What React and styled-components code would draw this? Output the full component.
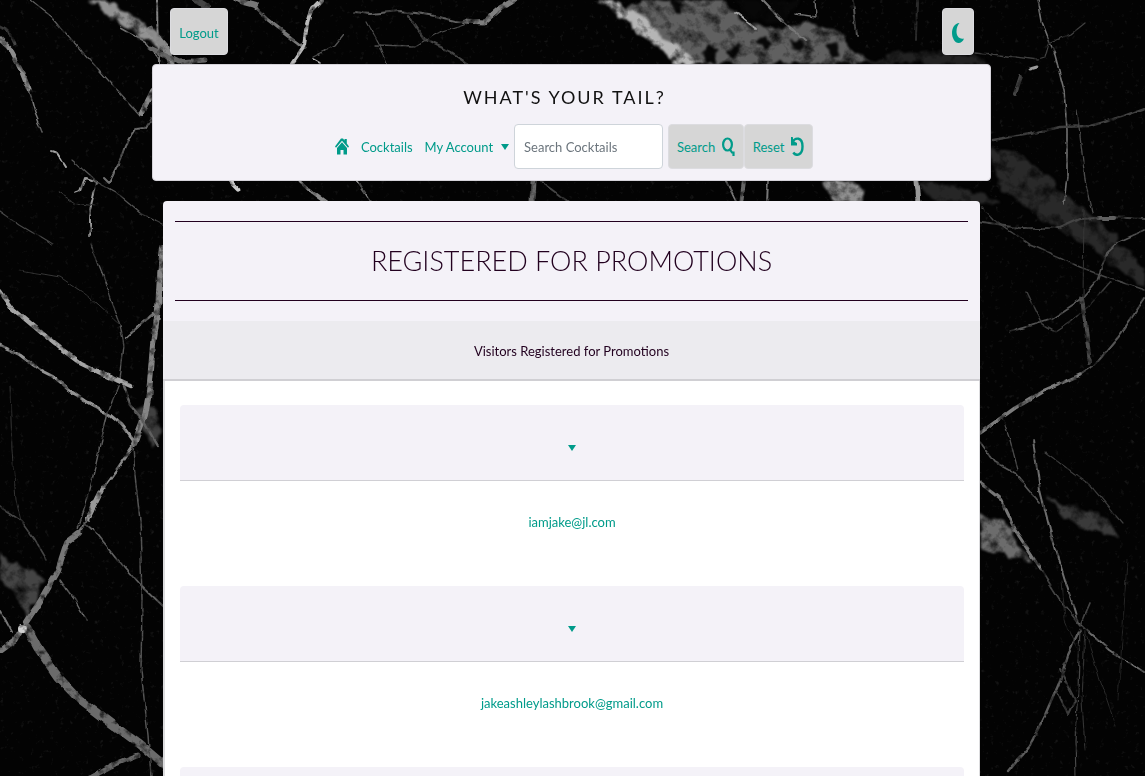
import React from "react";
import styled, { createGlobalStyle } from "styled-components";

const teal = "#009b8a";
const panel = "#f4f2f8";
const plum = "#22001f";

const GlobalStyle = createGlobalStyle`
  *, *::before, *::after { box-sizing: border-box; }
  body {
    margin: 0;
    min-height: 100vh;
    overflow-x: hidden;
    background: #030303;
    color: ${plum};
    font-family: Lato, "Open Sans", sans-serif;
    font-size: 13px;
    line-height: 28px;
  }
`;

const Backdrop = styled.svg`
  position: fixed;
  inset: 0;
  z-index: -1;
  width: 100%;
  height: 100%;
`;

const Page = styled.div`
  max-width: 841px;
  margin: 0 auto;
  padding-right: 2px;
  height: 100vh;
  overflow: hidden;
`;

const TopBar = styled.div`
  display: flex;
  justify-content: space-between;
  padding: 8px 17px 9px 18px;
`;

const Button = styled.button`
  display: inline-flex;
  align-items: center;
  justify-content: center;
  gap: 7px;
  min-width: ${(p) => p.$width}px;
  height: ${(p) => (p.$tall ? "47px" : "45px")};
  padding: ${(p) => (p.$tall ? "2px 6px 0" : "0 6px")};
  border: 1px solid #dcdce0;
  border-radius: 4px;
  background: #d6d6d6;
  color: ${teal};
  font: inherit;
  cursor: pointer;
  svg { flex-shrink: 0; }
`;

const Header = styled.header`
  display: flex;
  flex-direction: column;
  align-items: center;
  gap: 12px;
  height: 117px;
  padding-top: 17px;
  border: 1px solid #d5d3d9;
  border-radius: 4px;
  background: ${panel};
`;

const Brand = styled.a`
  margin-right: 14px;
  color: #111;
  font-size: 18px;
  line-height: 30px;
  letter-spacing: 2px;
  text-decoration: none;
  text-transform: uppercase;
`;

const Nav = styled.nav`
  display: flex;
  align-items: center;
  gap: 12px;
  padding-left: 5px;
`;

const NavLink = styled.a`
  display: inline-flex;
  align-items: center;
  gap: 8px;
  color: ${teal};
  text-decoration: none;
`;

const SearchForm = styled.form`
  display: flex;
  margin-left: -7px;
`;

const SearchInput = styled.input`
  width: 149px;
  height: 45px;
  margin-right: 5px;
  padding: 0 9px;
  border: 1px solid #ced4da;
  border-radius: 4px;
  background: #fff;
  color: #495057;
  font: inherit;
  &::placeholder { color: #6c757d; opacity: 1; }
`;

const Caret = styled.span`
  display: inline-block;
  border-top: 6px solid ${teal};
  border-right: 4px solid transparent;
  border-left: 4px solid transparent;
`;

const Main = styled.main`
  margin: 20px 11px 0;
  border-radius: 4px;
  background: ${panel};
  text-align: center;
`;

const Banner = styled.div`
  padding: 20px 12px;
`;

const Title = styled.h1`
  margin: 0;
  padding: 20px 0;
  border-top: 1px solid ${plum};
  border-bottom: 1px solid ${plum};
  font-size: 27px;
  font-weight: 300;
  line-height: 38px;
  text-transform: uppercase;
`;

const SectionHeader = styled.h2`
  margin: 0;
  padding: 16px 0 14px;
  border-bottom: 2px solid #d0cfd3;
  background: #ecebef;
  font-size: 13px;
  font-weight: 400;
  line-height: 28px;
`;

const List = styled.div`
  padding: 24px 15px;
  border: 1px solid #dcdcde;
  border-left-width: 2px;
  border-top: 0;
  background: #fff;
`;

const Visitor = styled.article`
  height: 181px;
`;

const Toggle = styled.button`
  display: flex;
  align-items: center;
  justify-content: center;
  width: 100%;
  height: 76px;
  padding: 10px 0 0;
  border: 0;
  border-bottom: 1px solid #d0cfd4;
  border-radius: 4px 4px 0 0;
  background: ${panel};
`;

const Email = styled.a`
  display: inline-block;
  margin-top: 27px;
  color: ${teal};
  text-decoration: none;
`;

const HomeIcon = () => (
  <svg width="14" height="17" viewBox="0 0 14 17" fill={teal} aria-hidden="true">
    <path d="M6 .500H8L9.500 2.500V1H11.800V5.500L14 8.500 13 9.800 7 2.700 1 9.800 0 8.500ZM7 4.200 12 10V16.500H8.500V12H5.500V16.500H2V10Z" />
  </svg>
);
const SearchIcon = () => (
  <svg width="13" height="20" viewBox="0 0 13 20" fill="none" stroke={teal} aria-hidden="true">
    <ellipse cx="5.500" cy="7.500" rx="4.400" ry="6" strokeWidth="2.200" />
    <path d="M8.300 13 10 15.500H11.500V19" strokeWidth="2.200" />
  </svg>
);
const ResetIcon = () => (
  <svg width="13" height="19" viewBox="0 0 13 19" fill="none" stroke={teal} aria-hidden="true">
    <path d="M2 4.500C4 .6 11.500-.5 11.500 9.500 11.500 18.500 5 19.500 2.300 15.500" strokeWidth="2.400" />
    <path d="M0 0H1.800L2.300 4 6 6V8.500H0Z" fill={teal} stroke="none" />
  </svg>
);
const MoonIcon = () => (
  <svg width="12" height="20" viewBox="0 0 12 20" fill={teal} aria-hidden="true">
    <path d="M7.500 0C2.500.5 0 5 0 10s3 10 6.500 10c2.500 0 4.500-1.700 5.500-4.500C7 16.500 4.500 13 4.500 8.500 4.500 5 5.500 2 7.500 0Z" />
  </svg>
);

// Each vein is [path, width, grey level].
const veins = [
  ["M30 0 52 17 70 38 90 60 110 82 140 115", 1.2, "#606060"],
  ["M158 0 159 64", 2, "#858585"],
  ["M120 28 145 42 160 60", 1.5, "#707070"],
  ["M0 27 8 31 14 44", 3, "#444"],
  ["M0 40 12 52 22 72 29 90", 5, "#8c8c8c"],
  ["M29 90 35 112 43 131", 1.5, "#777"],
  ["M51 151 57 153 66 167", 2, "#aaa"],
  ["M75 193 80 191 85 178 97 182 90 210 90 236", 2, "#999"],
  ["M72 160 97 182 115 192 140 213 163 225", 1.3, "#555"],
  ["M104 178 109 183 118 165 125 145 135 129 146 128 153 115", 2, "#707070"],
  ["M142 113 153 91", 6, "#888"],
  ["M58 192 75 203 95 206", 1, "#3a3a3a"],
  ["M91 245 103 275 112 305 120 325 124 345 120 380", 1.4, "#5a5a5a"],
  ["M20 270 60 277 88 296 120 325", 1, "#383838"],
  ["M0 211 20 225 53 245", 1.2, "#484848"],
  ["M0 291 12 308 30 323 55 344 80 363 105 375 130 386", 4.5, "#a5a5a5"],
  ["M0 345 20 355 40 370 52 376 70 391 85 401 110 415 122 425 133 440", 3, "#939393"],
  ["M163 248 160 275 158 309 153 345 149 393 145 415 134 444", 6, "#858585"],
  ["M126 338 140 325 160 308", 2.3, "#777"],
  ["M134 444 119 466 103 488 88 518", 2.3, "#888"],
  ["M103 488 88 518", 5, "#999"],
  ["M79 533 67 542 58 570 40 601 26 622", 6, "#777"],
  ["M88 518 79 533", 2, "#777"],
  ["M22 628 15 640 0 651", 5, "#777"],
  ["M27 628 38 648 58 677 80 700 110 723 140 745 167 768", 9, "#6b6b6b"],
  ["M0 507 20 520 33 538 46 560", 1.6, "#454545"],
  ["M118 386 108 412 100 445 88 498 78 528", 1.4, "#606060"],
  ["M84 522 98 535 118 560 140 585 163 607", 1.8, "#606060"],
  ["M133 446 135 476 140 520 142 600 141 670 148 735 151 776", 1.5, "#555"],
  ["M60 580 75 600 87 621", 1.5, "#666"],
  ["M92 776 115 764 138 755", 5, "#666"],
  ["M10 386 12 450 16 500 22 525", 1, "#353535"],
  ["M0 610 12 632", 2, "#777"],
  ["M123 386 130 405 143 420 157 445", 2.5, "#606060"],
  ["M150 30 165 46 172 64", 7, "#888"],
  ["M150 48 180 62 205 60", 5, "#666"],
  ["M195 0 208 8", 6, "#444"],
  ["M235 0 252 5 268 20 285 33 305 48", 3, "#777"],
  ["M241 2 256 6", 6, "#777"],
  ["M322 0 312 10 308 25 305 45 292 64", 4, "#b8b8b8"],
  ["M313 58 320 62", 2, "#aaa"],
  ["M313 56 335 45 343 35", 1.3, "#555"],
  ["M354 12 370 14 400 11 430 15 455 21 485 22 500 10 515 0", 2, "#606060"],
  ["M465 21 485 22 500 9 515 0", 5, "#808080"],
  ["M408 15 425 40 450 52 468 64", 2.3, "#444"],
  ["M375 45 415 46 440 32 465 24", 1.3, "#505050"],
  ["M367 22 380 45 387 64", 1.2, "#505050"],
  ["M735 12 755 28", 2, "#aaa"],
  ["M763 0 787 25 805 40", 2, "#777"],
  ["M815 0 816 17 795 14", 1.3, "#777"],
  ["M853 0 857 36", 2, "#555"],
  ["M917 0 916 40", 2, "#2a2a2a"],
  ["M230 181 239 190", 5, "#ccc"],
  ["M300 181 312 192 327 203", 3, "#888"],
  ["M357 181 372 203", 2, "#888"],
  ["M533 181 532 203", 5, "#666"],
  ["M540 181 570 203", 2, "#444"],
  ["M726 181 737 203", 2, "#777"],
  ["M744 181 741 203", 4, "#666"],
  ["M768 181 767 203", 2, "#777"],
  ["M916 181 918 203", 5, "#999"],
  ["M1038 0 1042 22 1055 55 1064 90 1067 130 1067 175 1064 205", 1.6, "#707070"],
  ["M975 52 1000 55 1038 60 1045 58 1049 43 1070 34 1085 22", 1.3, "#404040"],
  ["M1030 69 1037 67", 3, "#999"],
  ["M1021 76 1015 94", 4, "#444"],
  ["M992 140 1030 134 1060 127 1090 126 1120 117 1145 108", 2.5, "#404040"],
  ["M1077 110 1080 135 1085 180 1092 213", 1.3, "#4c4c4c"],
  ["M975 222 1020 228 1060 228 1080 219 1110 217 1145 219", 2, "#444"],
  ["M1098 218 1114 218", 4, "#606060"],
  ["M982 207 995 221 1030 245 1080 267 1110 278 1145 290", 1.5, "#444"],
  ["M1145 230 1118 242 1107 252 1097 280 1080 300 1050 320 1010 332", 1.8, "#555"],
  ["M1110 282 1090 305 1070 322 1055 332 1043 325 1027 292", 1.5, "#3c3c3c"],
  ["M1084 210 1083 300", 1, "#383838"],
  ["M1082 298 1090 362", 4, "#4c4c4c"],
  ["M1145 298 1120 335 1095 365 1080 375 1045 390", 2, "#555"],
  ["M1080 375 1045 390 1020 405 1015 408 980 433", 3.5, "#7c7c7c"],
  ["M1002 418 1010 440 1018 470", 1.3, "#505050"],
  ["M980 442 995 462 1015 473 1040 503", 1.8, "#555"],
  ["M1033 440 1040 490 1050 530 1065 580 1078 622 1085 628 1110 650 1145 673", 2, "#6c6c6c"],
  ["M980 482 1000 498 1015 530 1040 568", 3, "#777"],
  ["M1045 452 1090 485 1122 523", 1.2, "#3c3c3c"],
  ["M1040 568 1060 600 1080 625 1089 604", 1.7, "#444"],
  ["M1080 630 1068 655 1060 680 1045 715 1030 745 1008 772", 2.4, "#5c5c5c"],
  ["M1080 628 1078 690 1075 740 1076 776", 1.2, "#484848"],
  ["M1085 630 1082 700 1085 750", 1.2, "#333"],
  ["M1060 670 1075 700 1068 715 1056 690", 2, "#404040"],
  ["M1062 580 1065 620 1078 650", 1, "#2a2a2a"],
  ["M1085 630 1100 680 1115 725", 1, "#2a2a2a"],
  ["M1127 560 1122 640 1118 700", 1, "#262626"],
];

// Broad stone deposits: [path, grey level].
const deposits = [
  ["M90 0 108 0 125 10 150 27 167 43 164 52 140 38 115 20Z", "#929292"],
  ["M0 552 20 564 42 580 36 602 28 620 22 603 0 578Z", "#444"],
  ["M625 5 640 0 722 0 737 17 760 25 780 30 805 20 845 35 850 50 875 64 690 64 660 38Z", "#606060"],
  ["M597 0 612 0 640 15 665 38 690 55 703 64 678 64 650 42 625 20Z", "#b5b5b5"],
  ["M820 181 850 181 868 190 862 203 838 203Z", "#909090"],
  ["M900 50 975 55 990 64 870 64Z", "#222"],
  ["M990 150 1015 148 1060 190 1100 220 1145 268 1145 290 1090 246 1040 217 1000 187Z", "#292929"],
  ["M915 181 960 186 990 198 1000 203 940 203Z", "#262626"],
  ["M980 514 1005 520 1018 545 1032 563 1018 560 1000 552 980 547Z", "#6c6c6c"],
  ["M1045 497 1085 510 1110 518 1117 538 1080 528 1058 510Z", "#3a3a3a"],
  ["M136 410 156 408 160 436 153 448 140 425Z", "#404040"],
];
const hollows = [
  "M670 0 680 3 682 15 674 12Z",
  "M702 51 718 48 715 62 704 62Z",
  "M724 49 740 43 742 53 732 59Z",
  "M736 0 800 0 782 24 762 18 745 22Z",
  "M755 42 766 37 772 44 766 50Z",
  "M790 42 802 38 806 46 798 54Z",
  "M825 46 835 42 842 55 832 58Z",
];

const Marble = () => (
  <Backdrop viewBox="0 0 1145 776" preserveAspectRatio="xMidYMin slice" aria-hidden="true">
    <defs>
      <filter id="stone" x="0" y="0" width="1145" height="776" filterUnits="userSpaceOnUse" colorInterpolationFilters="sRGB">
        <feTurbulence type="fractalNoise" baseFrequency=".06" numOctaves="3" seed="4" result="warp" />
        <feDisplacementMap in="SourceGraphic" in2="warp" scale="5" xChannelSelector="R" yChannelSelector="G" result="bent" />
        <feGaussianBlur in="bent" stdDeviation=".6" result="soft" />
        <feTurbulence type="fractalNoise" baseFrequency=".12" numOctaves="4" seed="9" />
        <feColorMatrix values="0 0 0 0 0  0 0 0 0 0  0 0 0 0 0  2.200 0 0 0 -.15" result="grain" />
        <feComposite in="soft" in2="grain" operator="in" />
      </filter>
      <filter id="cloud" x="0" y="0" width="1145" height="776" filterUnits="userSpaceOnUse" colorInterpolationFilters="sRGB">
        <feTurbulence type="fractalNoise" baseFrequency=".07" numOctaves="4" seed="21" result="warp" />
        <feDisplacementMap in="SourceGraphic" in2="warp" scale="12" xChannelSelector="R" yChannelSelector="G" result="bent" />
        <feGaussianBlur in="bent" stdDeviation="1" result="soft" />
        <feTurbulence type="fractalNoise" baseFrequency=".07" numOctaves="4" seed="7" />
        <feColorMatrix values="0 0 0 0 0  0 0 0 0 0  0 0 0 0 0  2 0 0 0 -.1" result="grain" />
        <feComposite in="soft" in2="grain" operator="in" />
      </filter>
      <filter id="dust" x="0" y="0" width="1145" height="776" filterUnits="userSpaceOnUse" colorInterpolationFilters="sRGB">
        <feTurbulence type="fractalNoise" baseFrequency=".2" numOctaves="3" seed="12" />
        <feColorMatrix values="0 0 0 0 .3  0 0 0 0 .3  0 0 0 0 .3  3 0 0 0 -1.950" />
      </filter>
    </defs>
    <rect width="1145" height="776" fill="#030303" />
    <rect width="1145" height="776" filter="url(#dust)" opacity=".35" />
    <g filter="url(#cloud)">
      {deposits.map(([d, tone]) => <path key={d} d={d} fill={tone} />)}
      {hollows.map((d) => <path key={d} d={d} fill="#080808" />)}
    </g>
    <g filter="url(#stone)" fill="none" strokeLinejoin="round" strokeLinecap="round">
      {veins.map(([d, width, tone]) => <path key={d} d={d} stroke={tone} strokeWidth={width} />)}
      <circle cx="22" cy="628" r="4" fill="#d0d0d0" />
    </g>
  </Backdrop>
);

const visitors = ["iamjake@jl.com", "jakeashleylashbrook@gmail.com", ""];

export default function App() {
  return (
    <>
      <GlobalStyle />
      <Marble />
      <Page>
        <TopBar>
          <Button $tall $width={58} type="button">Logout</Button>
          <Button $tall $width={32} type="button" aria-label="Dark mode"><MoonIcon /></Button>
        </TopBar>
        <Header>
          <Brand href="#home">What's your tail?</Brand>
          <Nav>
            <NavLink href="#home" aria-label="Home"><HomeIcon /></NavLink>
            <NavLink href="#cocktails">Cocktails</NavLink>
            <NavLink href="#account">My Account <Caret /></NavLink>
            <SearchForm>
              <SearchInput type="search" aria-label="Search Cocktails" placeholder="Search Cocktails" />
              <Button $width={76} type="button">Search <SearchIcon /></Button>
              <Button $width={69} type="reset">Reset <ResetIcon /></Button>
            </SearchForm>
          </Nav>
        </Header>
        <Main>
          <Banner><Title>Registered for Promotions</Title></Banner>
          <SectionHeader>Visitors Registered for Promotions</SectionHeader>
          <List>
            {visitors.map((email, i) => (
              <Visitor key={i}>
                <Toggle type="button" aria-label="Visitor details"><Caret /></Toggle>
                {email && <Email href={`mailto:${email}`}>{email}</Email>}
              </Visitor>
            ))}
          </List>
        </Main>
      </Page>
    </>
  );
}
